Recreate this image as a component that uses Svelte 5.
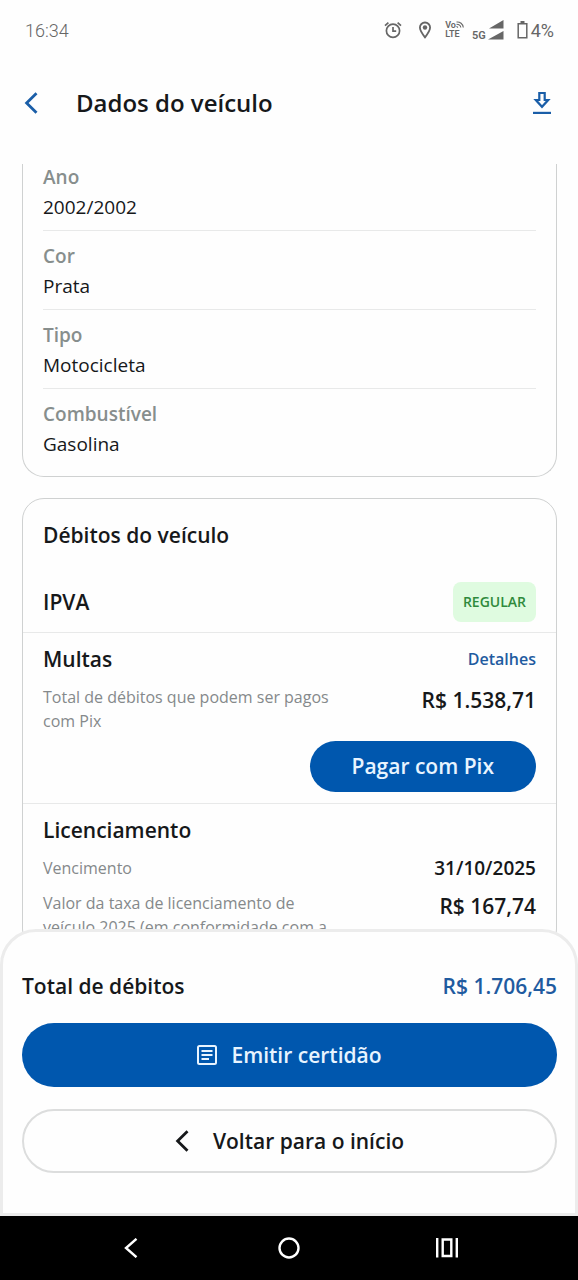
<script>
  const details = [
    { label: 'Ano', value: '2002/2002' },
    { label: 'Cor', value: 'Prata' },
    { label: 'Tipo', value: 'Motocicleta' },
    { label: 'Combustível', value: 'Gasolina' }
  ];
</script>

<div class="screen">
  <div class="status">
    <span class="clock">16:34</span>
    <div class="indicators">
      <svg class="alarm" width="18" height="18" viewBox="0 0 18 18" fill="none" stroke="#666" stroke-width="1.7">
        <circle cx="9" cy="9.8" r="6.6" />
        <path d="M9 6v4.2h3.2M1 4.6l3.4-3M17 4.6l-3.4-3" />
      </svg>
      <svg class="pin" width="12" height="18" viewBox="1 0 12 18" fill="none" stroke="#666" stroke-width="1.8">
        <path d="M7 16.4C4.2 12.800 1.900 9.800 1.900 6.600a5.100 5.100 0 0 1 10.200 0c0 3.200-2.300 6.200-5.100 9.800z" />
        <circle cx="7" cy="6.500" r="2.200" fill="#666" stroke="none" />
      </svg>
      <span class="volte">
        <span class="vo">Vo<svg width="8" height="7" viewBox="0 0 8 7" fill="none" stroke="#666" stroke-width="1.1"><path d="M.5 1C4 .6 7 3 7.300 6.500M.5 3.200C3 3.200 4.600 4.600 4.800 6.500M.5 5.400l1.500 1.100" /></svg></span>
        <span>LTE</span>
      </span>
      <span class="network">5G</span>
      <svg class="signal" width="16" height="20" viewBox="0 0 16 20" fill="#666">
        <path d="M15.500 0v8.500H1zM15.500 11v8.500H0z" />
      </svg>
      <svg class="battery" width="11" height="18" viewBox="0 0 11 18" fill="none" stroke="#666" stroke-width="1.500">
        <path d="M1.200 2.800h8.600v14H1.200z" /><path d="M3.500 1.200h4" stroke-width="2.400" />
      </svg>
      <span class="charge">4%</span>
    </div>
  </div>

  <header>
    <button class="icon" aria-label="Voltar">
      <svg width="14" height="22" viewBox="0 0 14 22" fill="none" stroke="#1a5ea8" stroke-width="2.800"><path d="M12.500 1.200 2.600 11l9.900 9.800" /></svg>
    </button>
    <h1>Dados do veículo</h1>
    <button class="icon" aria-label="Baixar">
      <svg width="18" height="24" viewBox="0 0 18 24" fill="none" stroke="#1a5ea8" stroke-width="2.200">
        <path d="M6.300 2h5.400v7h3.500L9 15.800 2.800 9h3.500z" /><path d="M0 21.900h18" />
      </svg>
    </button>
  </header>

  <main>
    <section class="card vehicle">
      <dl>
        {#each details as item}
          <div class="detail">
            <dt>{item.label}</dt>
            <dd>{item.value}</dd>
          </div>
        {/each}
      </dl>
    </section>

    <section class="card">
      <h2 class="title">Débitos do veículo</h2>
      <div class="group ipva">
        <h2>IPVA</h2>
        <span class="badge">REGULAR</span>
      </div>
      <div class="group">
        <div class="line">
          <h2>Multas</h2>
          <a href="#detalhes">Detalhes</a>
        </div>
        <div class="line entry">
          <p>Total de débitos que podem ser pagos com Pix</p>
          <strong>R$ 1.538,71</strong>
        </div>
        <button class="pix">Pagar com Pix</button>
      </div>
      <div class="group">
        <h2>Licenciamento</h2>
        <div class="line entry">
          <p>Vencimento</p>
          <span class="date">31/10/2025</span>
        </div>
        <div class="line entry">
          <p>Valor da taxa de licenciamento de veículo 2025 (em conformidade com a</p>
          <strong>R$ 167,74</strong>
        </div>
      </div>
    </section>
  </main>

  <footer>
    <div class="line total">
      <h2>Total de débitos</h2>
      <strong>R$ 1.706,45</strong>
    </div>
    <button class="action primary">
      <svg width="20" height="20" viewBox="0 0 20 20" fill="none" stroke="#e8f4ff" stroke-width="2">
        <rect x="1" y="1" width="18" height="18" rx="1.500" /><path d="M4.500 6h11M4.500 10h11M4.500 14h7.500" />
      </svg>
      Emitir certidão
    </button>
    <button class="action back">
      <svg width="14" height="22" viewBox="0 0 14 22" fill="none" stroke="#16181a" stroke-width="2.800"><path d="M12.500 1.200 2.600 11l9.900 9.800" /></svg>
      Voltar para o início
    </button>
  </footer>

  <nav>
    <button aria-label="Voltar">
      <svg width="14" height="20" viewBox="0 0 14 20" fill="none" stroke="#fff" stroke-width="2.400"><path d="M12.500.8 2 10l10.500 9.200" /></svg>
    </button>
    <button aria-label="Início">
      <svg width="22" height="22" viewBox="0 0 22 22" fill="none" stroke="#fff" stroke-width="2.400"><circle cx="11" cy="11" r="9.500" /></svg>
    </button>
    <button aria-label="Recentes">
      <svg width="22" height="20" viewBox="0 0 22 20" fill="none" stroke="#fff" stroke-width="2.400"><path d="M1.200 0v19.500M20.800 0v19.500M6.700 1.500h8.600v16.500H6.700z" /></svg>
    </button>
  </nav>
</div>

<style>
  :global(body) {
    margin: 0;
    background: #fefefe;
  }
  .screen {
    display: flex;
    flex-direction: column;
    height: 100vh;
    overflow: hidden;
    background: #fefefe;
    color: #16181a;
    font-family: 'Open Sans', 'Noto Sans', sans-serif;
  }
  h1, h2, p, dl, dd { margin: 0; }
  button {
    padding: 0;
    border: 0;
    background: none;
    font: inherit;
    color: inherit;
    cursor: pointer;
  }
  svg { display: block; flex: none; }

  .status {
    display: flex;
    align-items: center;
    justify-content: space-between;
    height: 60px;
    padding: 0 24px 0 25px;
    font-family: Roboto, sans-serif;
    font-size: 18px;
    color: #666;
  }
  .clock { font-weight: 300; }
  .indicators { display: flex; align-items: center; }
  .pin { margin-left: 17px; }
  .volte {
    display: flex;
    flex-direction: column;
    margin-left: 14px;
    font-size: 9px;
    line-height: 9px;
    font-weight: 600;
  }
  .vo { display: flex; }
  .network {
    align-self: flex-end;
    margin-left: 8px;
    font-size: 11px;
    line-height: 10px;
    font-weight: 600;
  }
  .signal { margin-left: 2px; }
  .battery { margin-left: 13px; }
  .charge { margin-left: 3px; }

  header {
    display: flex;
    align-items: center;
    height: 86px;
    margin-bottom: 18px;
    padding: 0 27px 0 24px;
  }
  h1 {
    flex: 1;
    margin-left: 38px;
    font-size: 24px;
    line-height: 34px;
    font-weight: 600;
  }

  main {
    flex: 1;
    min-height: 0;
    overflow: hidden;
    padding: 0 21px 0 22px;
  }
  .card {
    border: 1px solid #cfd1d1;
    border-radius: 22px;
  }
  .vehicle {
    margin: -12px 0 21px;
    border-top: 0;
    border-radius: 0 0 22px 22px;
    padding: 0 20px 9px;
  }
  .detail {
    padding: 12px 0 6px;
    border-bottom: 1px solid #e8e9e9;
  }
  .detail:last-child { border-bottom: 0; }
  dt {
    font-size: 19px;
    line-height: 26px;
    font-weight: 600;
    color: #878e8d;
  }
  dd {
    font-size: 19px;
    line-height: 34px;
  }
  h2 {
    font-size: 21px;
    line-height: 30px;
    font-weight: 600;
  }
  .title { padding: 21px 20px 23px; }
  .group {
    padding: 11px 20px;
    border-bottom: 1px solid #e8e9e9;
  }
  .group:last-child { border-bottom: 0; }
  .line {
    display: flex;
    justify-content: space-between;
  }
  .ipva {
    display: flex;
    align-items: center;
    justify-content: space-between;
    padding: 9px 20px 10px;
  }
  .badge {
    padding: 10px;
    border-radius: 8px;
    background: #dffbe0;
    color: #2f8a3c;
    font-size: 14px;
    line-height: 20px;
    font-weight: 600;
  }
  a {
    color: #1f5ba0;
    font-size: 16px;
    line-height: 30px;
    font-weight: 600;
    text-decoration: none;
  }
  .entry {
    padding-top: 11px;
    gap: 16px;
  }
  p {
    max-width: 300px;
    font-size: 16px;
    line-height: 24px;
    color: #85898b;
  }
  strong {
    font-size: 21px;
    line-height: 30px;
    font-weight: 600;
    white-space: nowrap;
  }
  .date {
    font-size: 19px;
    line-height: 24px;
    font-weight: 600;
  }
  .pix {
    display: block;
    margin: 8px 0 0 auto;
    padding: 0 42px;
    border-radius: 26px;
    background: #0057ae;
    color: #e8f4ff;
    font-size: 21px;
    line-height: 51px;
    font-weight: 600;
  }

  footer {
    position: relative;
    margin-top: -32px;
    padding: 39px 18px 40px 19px;
    border: 3px solid #ececec;
    border-radius: 36px 36px 0 0;
    background: #fefefe;
  }
  .total strong { color: #1f5ba0; }
  .action {
    display: flex;
    align-items: center;
    justify-content: center;
    gap: 14px;
    width: 100%;
    height: 64px;
    margin-top: 22px;
    border-radius: 32px;
    font-size: 21px;
    font-weight: 600;
  }
  .primary {
    background: #0057ae;
    color: #e8f4ff;
  }
  .back {
    gap: 24px;
    border: 2px solid #dcdddd;
  }

  nav {
    display: flex;
    align-items: center;
    justify-content: space-around;
    height: 64px;
    padding: 0 52px;
    background: #000;
  }
  nav button {
    display: grid;
    place-items: center;
    flex: 1;
    height: 64px;
  }
</style>
